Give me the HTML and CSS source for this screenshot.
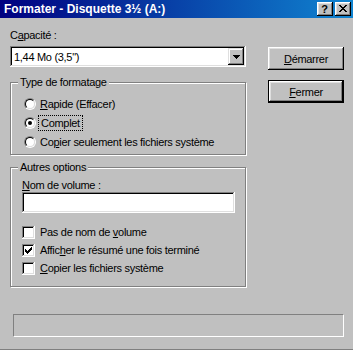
FILE: index.html
```html
<!DOCTYPE html>
<html lang="fr">
<head>
    <meta charset="UTF-8">
    <title>Formater - Disquette 3½ (A:)</title>
    <link rel="stylesheet" href="styles.css">
</head>
<body>
    <div class="window">
        <div class="titlebar">
            <span class="title">Formater - Disquette 3½ (A:)</span>
            <div class="title-buttons">
                <div class="tbtn help">?</div>
                <div class="tbtn close">
                    <svg width="8" height="7" viewBox="0 0 8 7"><path d="M0 0h2v1H0zM6 0h2v1H6zM1 1h2v1H1zM5 1h2v1H5zM2 2h4v1H2zM3 3h2v1H3zM2 4h4v1H2zM1 5h2v1H1zM5 5h2v1H5zM0 6h2v1H0zM6 6h2v1H6z" fill="#000"/></svg>
                </div>
            </div>
        </div>

        <div class="content">
            <div class="main">
                <div class="left">
                    <div class="label">C<u>a</u>pacité :</div>
                    <div class="combo">
                        <span class="combo-value">1,44 Mo (3,5&quot;)</span>
                        <div class="combo-arrow">
                            <svg width="7" height="4" viewBox="0 0 7 4"><path d="M0 0h7v1H0zM1 1h5v1H1zM2 2h3v1H2zM3 3h1v1H3z" fill="#000"/></svg>
                        </div>
                    </div>

                    <div class="group group-type">
                        <span class="legend">Type de formatage</span>
                        <div class="option">
                            <span class="radio"></span>
                            <span><u>R</u>apide (Effacer)</span>
                        </div>
                        <div class="option">
                            <span class="radio checked"></span>
                            <span class="focus">Complet</span>
                        </div>
                        <div class="option">
                            <span class="radio"></span>
                            <span>Co<u>p</u>ier seulement les fichiers système</span>
                        </div>
                    </div>

                    <div class="group group-other">
                        <span class="legend">Autres options</span>
                        <div class="label"><u>N</u>om de volume :</div>
                        <div class="textbox"></div>
                        <div class="checks">
                            <div class="option check-row">
                                <span class="checkbox"></span>
                                <span>Pas de nom de <u>v</u>olume</span>
                            </div>
                            <div class="option check-row">
                                <span class="checkbox">
                                    <svg width="7" height="7" viewBox="0 0 7 7"><path d="M0 2h1v3H0zM1 3h1v3H1zM2 4h1v3H2zM3 3h1v3H3zM4 2h1v3H4zM5 1h1v3H5zM6 0h1v3H6z" fill="#000"/></svg>
                                </span>
                                <span>Affic<u>h</u>er le résumé une fois terminé</span>
                            </div>
                            <div class="option check-row">
                                <span class="checkbox"></span>
                                <span><u>C</u>opier les fichiers système</span>
                            </div>
                        </div>
                    </div>
                </div>

                <div class="actions">
                    <button class="btn"><u>D</u>émarrer</button>
                    <button class="btn default"><u>F</u>ermer</button>
                </div>
            </div>

            <div class="progress"></div>
        </div>
    </div>
</body>
</html>
```

FILE: styles.css
```css
* {
    margin: 0;
    padding: 0;
    box-sizing: border-box;
}

body {
    width: 353px;
    height: 350px;
    overflow: hidden;
    background: #c0c0c0;
    font-family: "Liberation Sans", Arial, sans-serif;
    font-size: 11px;
    letter-spacing: -0.3px;
    color: #000;
}

u {
    text-underline-offset: 1px;
}

.window {
    width: 353px;
    height: 350px;
    display: flex;
    flex-direction: column;
    border-bottom: 1px solid #808080;
}

/* Title bar */

.titlebar {
    height: 18px;
    flex-shrink: 0;
    display: flex;
    align-items: center;
    justify-content: space-between;
    padding: 0 2px 0 4px;
    background: linear-gradient(to right, #000080, #1084d0);
    color: #ffffff;
}

.title {
    font-size: 12px;
    font-weight: bold;
    letter-spacing: 0;
}

.title-buttons {
    display: flex;
    gap: 2px;
}

.tbtn {
    width: 16px;
    height: 14px;
    display: flex;
    align-items: center;
    justify-content: center;
    background: #c0c0c0;
    color: #000;
    box-shadow: inset -1px -1px #000, inset 1px 1px #fff, inset -2px -2px #808080, inset 2px 2px #dfdfdf;
}

.tbtn.help {
    font-size: 11px;
    font-weight: bold;
    letter-spacing: 0;
    line-height: 14px;
    padding: 0 1px 0 0;
}

.tbtn.close svg {
    margin: 0 1px 1px 0;
}

/* Content */

.content {
    flex: 1;
    padding: 11px 9px 0 10px;
}

.main {
    display: flex;
    justify-content: space-between;
}

.left {
    width: 237px;
}

.label {
    line-height: 13px;
    height: 13px;
}

.combo {
    margin-top: 4px;
    width: 236px;
    height: 21px;
    display: flex;
    align-items: center;
    justify-content: space-between;
    padding: 2px 2px 2px 4px;
    background: #fff;
    box-shadow: inset -1px -1px #fff, inset 1px 1px #808080, inset -2px -2px #dfdfdf, inset 2px 2px #000;
}

.combo-arrow {
    width: 16px;
    height: 17px;
    display: flex;
    align-items: center;
    justify-content: center;
    background: #c0c0c0;
    box-shadow: inset -1px -1px #000, inset 1px 1px #dfdfdf, inset -2px -2px #808080, inset 2px 2px #fff;
}

/* Group boxes */

.group {
    position: relative;
    width: 236px;
    border: 1px solid #808080;
    box-shadow: 1px 1px 0 #fff, inset 1px 1px 0 #fff;
}

.legend {
    position: absolute;
    top: -7px;
    left: 7px;
    padding: 0 2px;
    line-height: 13px;
    background: #c0c0c0;
}

.group-type {
    margin-top: 15px;
    height: 73px;
    padding: 11px 0 0 13px;
}

.group-other {
    margin-top: 12px;
    height: 120px;
    padding: 11px 0 0 11px;
}

.option {
    display: flex;
    align-items: center;
    gap: 4px;
    height: 19px;
    white-space: nowrap;
}

.radio {
    width: 12px;
    height: 12px;
    flex-shrink: 0;
    border-radius: 50%;
    border: 1px solid;
    border-color: #808080 #fff #fff #808080;
    display: flex;
    align-items: center;
    justify-content: center;
}

.radio::before {
    content: "";
    width: 10px;
    height: 10px;
    border-radius: 50%;
    border: 1px solid;
    border-color: #000 #dfdfdf #dfdfdf #000;
    background: #fff;
    box-sizing: border-box;
}

.radio.checked::after {
    content: "";
    position: absolute;
    width: 4px;
    height: 4px;
    border-radius: 50%;
    background: #000;
}

.focus {
    outline: 1px dotted #000;
    outline-offset: 1px;
    padding: 0 1px;
}

.textbox {
    width: 213px;
    height: 21px;
    background: #fff;
    box-shadow: inset -1px -1px #fff, inset 1px 1px #808080, inset -2px -2px #dfdfdf, inset 2px 2px #000;
}

.checks {
    margin-top: 10px;
}

.check-row {
    height: 18px;
    gap: 5px;
}

.checkbox {
    width: 13px;
    height: 13px;
    flex-shrink: 0;
    display: flex;
    align-items: center;
    justify-content: center;
    background: #fff;
    box-shadow: inset -1px -1px #fff, inset 1px 1px #808080, inset -2px -2px #dfdfdf, inset 2px 2px #000;
}

/* Buttons */

.actions {
    width: 76px;
    padding-top: 18px;
    display: flex;
    flex-direction: column;
    gap: 10px;
}

.btn {
    width: 76px;
    height: 23px;
    border: none;
    background: #c0c0c0;
    font-family: inherit;
    font-size: 11px;
    letter-spacing: -0.3px;
    color: #000;
    box-shadow: inset -1px -1px #000, inset 1px 1px #fff, inset -2px -2px #808080, inset 2px 2px #dfdfdf;
}

.btn.default {
    border: 1px solid #000;
    box-shadow: inset -1px -1px #000, inset 1px 1px #fff, inset -2px -2px #808080, inset 2px 2px #dfdfdf;
}

/* Progress */

.progress {
    margin: 27px 0 0 3px;
    width: 331px;
    height: 23px;
    border: 1px solid;
    border-color: #808080 #fff #fff #808080;
}
```
